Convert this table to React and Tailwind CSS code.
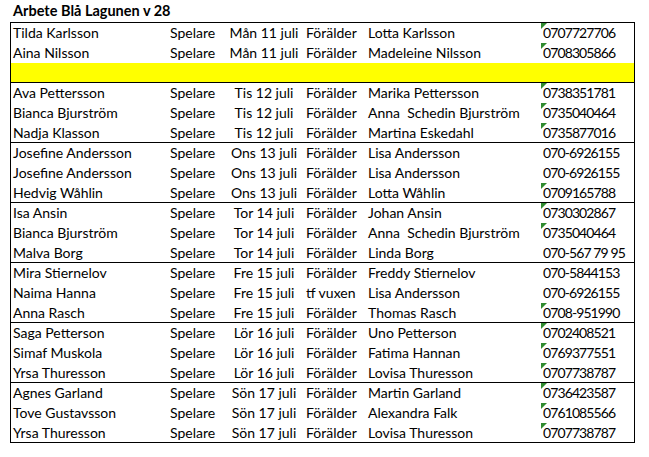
import React from "react";

const groups = [
  [
    ["Tilda Karlsson", "Mån 11 juli", "Förälder", "Lotta Karlsson", "0707727706", true],
    ["Aina Nilsson", "Mån 11 juli", "Förälder", "Madeleine Nilsson", "0708305866", true],
    null,
  ],
  [
    ["Ava Pettersson", "Tis 12 juli", "Förälder", "Marika Pettersson", "0738351781", true],
    ["Bianca Bjurström", "Tis 12 juli", "Förälder", "Anna  Schedin Bjurström", "0735040464", true],
    ["Nadja Klasson", "Tis 12 juli", "Förälder", "Martina Eskedahl", "0735877016", true],
  ],
  [
    ["Josefine Andersson", "Ons 13 juli", "Förälder", "Lisa Andersson", "070-6926155", false],
    ["Josefine Andersson", "Ons 13 juli", "Förälder", "Lisa Andersson", "070-6926155", false],
    ["Hedvig Wåhlin", "Ons 13 juli", "Förälder", "Lotta Wåhlin", "0709165788", true],
  ],
  [
    ["Isa Ansin", "Tor 14 juli", "Förälder", "Johan Ansin", "0730302867", true],
    ["Bianca Bjurström", "Tor 14 juli", "Förälder", "Anna  Schedin Bjurström", "0735040464", true],
    ["Malva Borg", "Tor 14 juli", "Förälder", "Linda Borg", "070-567 79 95", false],
  ],
  [
    ["Mira Stiernelov", "Fre 15 juli", "Förälder", "Freddy Stiernelov", "070-5844153", false],
    ["Naima Hanna", "Fre 15 juli", "tf vuxen", "Lisa Andersson", "070-6926155", false],
    ["Anna Rasch", "Fre 15 juli", "Förälder", "Thomas Rasch", "0708-951990", true],
  ],
  [
    ["Saga Petterson", "Lör 16 juli", "Förälder", "Uno Petterson", "0702408521", true],
    ["Simaf Muskola", "Lör 16 juli", "Förälder", "Fatima Hannan", "0769377551", true],
    ["Yrsa Thuresson", "Lör 16 juli", "Förälder", "Lovisa Thuresson", "0707738787", true],
  ],
  [
    ["Agnes Garland", "Sön 17 juli", "Förälder", "Martin Garland", "0736423587", true],
    ["Tove Gustavsson", "Sön 17 juli", "Förälder", "Alexandra Falk", "0761085566", true],
    ["Yrsa Thuresson", "Sön 17 juli", "Förälder", "Lovisa Thuresson", "0707738787", true],
  ],
];

function Row({ r, h }) {
  if (!r) {
    return <div className={`${h} bg-[#ffff00]`} />;
  }
  const [name, date, role, parent, phone, tri] = r;
  return (
    <div className={`${h} flex items-center`}>
      <div className="w-[157px] pl-[2px] whitespace-pre">{name}</div>
      <div className="w-[60px] pl-[2px]">Spelare</div>
      <div className="w-[72px] text-center whitespace-nowrap">{date}</div>
      <div className="w-[66px] pl-[6px] whitespace-nowrap">{role}</div>
      <div className="w-[174px] pl-[2px] whitespace-pre">{parent}</div>
      <div className="relative w-[94px] h-full flex items-center pl-[3px] whitespace-nowrap tracking-[-0.9px]">
        {tri && (
          <svg className="absolute left-[1px] top-0" width="6" height="6" viewBox="0 0 6 6">
            <polygon points="0,0 6,0 0,6" fill="#2f8a2f" />
          </svg>
        )}
        {phone}
      </div>
    </div>
  );
}

export default function App() {
  return (
    <div
      className="w-[649px] h-[457px] bg-white text-black text-[14px] leading-none"
      style={{ fontFamily: "Lato, 'Liberation Sans', sans-serif" }}
    >
      <div className="h-[22px] pl-[13px] flex items-center font-bold text-[14.5px]">
        Arbete Blå Lagunen v 28
      </div>
      <div className="ml-[10px] w-[625px] border border-black">
        {groups.map((g, gi) => (
          <div key={gi} className={gi === 0 ? "" : "border-t border-black"}>
            <Row r={g[0]} h="h-[20px]" />
            <Row r={g[1]} h="h-[20px]" />
            <Row r={g[2]} h="h-[19px]" />
          </div>
        ))}
      </div>
    </div>
  );
}
